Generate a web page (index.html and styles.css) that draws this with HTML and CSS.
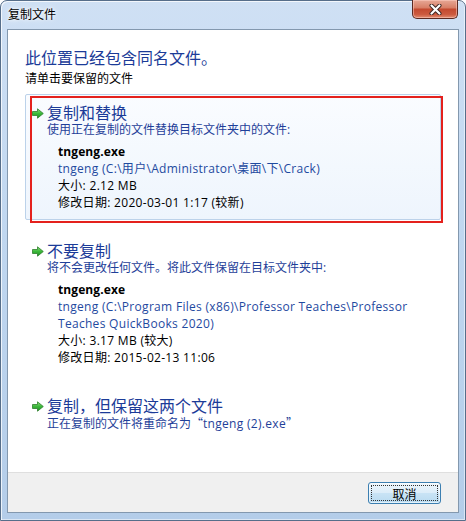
FILE: index.html
```html
<!DOCTYPE html>
<html lang="zh">
<head>
    <meta charset="UTF-8">
    <meta name="viewport" content="width=device-width, initial-scale=1.0">
    <title>复制文件</title>
    <link rel="stylesheet" href="styles.css">
</head>
<body>
    <!-- 共用的箭头渐变 -->
    <svg class="svg-defs" width="0" height="0" aria-hidden="true">
        <defs>
            <linearGradient id="arrowGreen" x1="0" y1="0" x2="0" y2="1">
                <stop offset="0" stop-color="#8be07a"/>
                <stop offset="0.5" stop-color="#3cb83a"/>
                <stop offset="1" stop-color="#1f8f22"/>
            </linearGradient>
        </defs>
    </svg>

    <div class="window">
        <div class="titlebar">
            <span class="window-title">复制文件</span>
            <button class="close-btn" aria-label="关闭">
                <svg width="13" height="11" viewBox="0 0 13 11">
                    <path d="M2.5 1.5 L10.5 9.5 M10.5 1.5 L2.5 9.5" stroke="#3a2320" stroke-width="4" stroke-linecap="round"/>
                    <path d="M2.5 1.5 L10.5 9.5 M10.5 1.5 L2.5 9.5" stroke="#fff" stroke-width="2.2" stroke-linecap="round"/>
                </svg>
            </button>
        </div>

        <div class="client">
            <div class="content">
                <h1 class="main-title">此位置已经包含同名文件。</h1>
                <p class="hint">请单击要保留的文件</p>

                <!-- 复制和替换 -->
                <div class="option selected">
                    <svg class="arrow" width="12" height="11" viewBox="0 0 12 11">
                        <path d="M0.5 3.5 H5.5 V0.8 L11.3 5.5 L5.5 10.2 V7.5 H0.5 Z" fill="url(#arrowGreen)" stroke="#2c7d2b" stroke-width="0.8"/>
                    </svg>
                    <div class="option-body">
                        <div class="option-title">复制和替换</div>
                        <div class="option-desc">使用正在复制的文件替换目标文件夹中的文件:</div>
                        <div class="file-info">
                            <div class="file-name">tngeng.exe</div>
                            <div class="file-path">tngeng (C:\用户\Administrator\桌面\下\Crack)</div>
                            <div>大小: 2.12 MB</div>
                            <div>修改日期: 2020-03-01 1:17 (较新)</div>
                        </div>
                    </div>
                </div>

                <!-- 不要复制 -->
                <div class="option">
                    <svg class="arrow" width="12" height="11" viewBox="0 0 12 11">
                        <path d="M0.5 3.5 H5.5 V0.8 L11.3 5.5 L5.5 10.2 V7.5 H0.5 Z" fill="url(#arrowGreen)" stroke="#2c7d2b" stroke-width="0.8"/>
                    </svg>
                    <div class="option-body">
                        <div class="option-title">不要复制</div>
                        <div class="option-desc">将不会更改任何文件。将此文件保留在目标文件夹中:</div>
                        <div class="file-info">
                            <div class="file-name">tngeng.exe</div>
                            <div class="file-path">tngeng (C:\Program Files (x86)\Professor Teaches\Professor Teaches QuickBooks 2020)</div>
                            <div>大小: 3.17 MB (较大)</div>
                            <div>修改日期: 2015-02-13 11:06</div>
                        </div>
                    </div>
                </div>

                <!-- 保留两个文件 -->
                <div class="option">
                    <svg class="arrow" width="12" height="11" viewBox="0 0 12 11">
                        <path d="M0.5 3.5 H5.5 V0.8 L11.3 5.5 L5.5 10.2 V7.5 H0.5 Z" fill="url(#arrowGreen)" stroke="#2c7d2b" stroke-width="0.8"/>
                    </svg>
                    <div class="option-body">
                        <div class="option-title">复制，但保留这两个文件</div>
                        <div class="option-desc">正在复制的文件将重命名为<span class="cjk">“</span><span class="latin">tngeng (2).exe</span><span class="cjk">”</span></div>
                    </div>
                </div>
            </div>

            <div class="footer">
                <button class="btn">取消</button>
            </div>
        </div>
    </div>
</body>
</html>
```

FILE: styles.css
```css
* {
    margin: 0;
    padding: 0;
    box-sizing: border-box;
}

html, body {
    width: 466px;
    height: 521px;
    overflow: hidden;
}

body {
    font-family: "Open Sans", "Noto Sans CJK SC", sans-serif;
    font-size: 12px;
    line-height: 17px;
    color: #000;
    background: #fff;
}

.svg-defs {
    display: block;
    width: 0;
    height: 0;
}

/* 窗口外框 (Aero) */
.window {
    height: 521px;
    display: flex;
    flex-direction: column;
    padding: 0 6px 7px 6px;
    border: 1px solid #566e8a;
    border-radius: 7px 7px 0 0;
    background: linear-gradient(to bottom, #cfe0f4 0%, #c0d7f0 45%, #b4cde9 100%);
    box-shadow: inset 1px 1px 0 rgba(255, 255, 255, 0.75), inset -1px -1px 0 rgba(255, 255, 255, 0.5);
}

.titlebar {
    height: 28px;
    display: flex;
    justify-content: space-between;
    align-items: flex-start;
    padding-left: 1px;
}

.window-title {
    margin-top: 4px;
    font-family: "Noto Sans CJK SC", sans-serif;
    font-size: 12px;
    line-height: 18px;
    color: #000;
    text-shadow: 0 0 6px #fff, 0 0 3px #fff;
}

.close-btn {
    width: 46px;
    height: 19px;
    margin-top: -1px;
    margin-right: 1px;
    display: flex;
    align-items: center;
    justify-content: center;
    border: 1px solid #5b2a22;
    border-top: none;
    border-radius: 0 0 5px 5px;
    background: linear-gradient(to bottom, #e7a896 0%, #d88068 42%, #c44a30 52%, #cc5a3f 80%, #e28d72 100%);
    box-shadow: inset 0 0 0 1px rgba(255, 210, 200, 0.5);
}

/* 客户区 */
.client {
    flex: 1;
    display: flex;
    flex-direction: column;
    border: 1px solid #8398ae;
    background: #fff;
}

.content {
    flex: 1;
    padding: 17px 17px 0 17px;
}

.main-title {
    font-family: "Noto Sans CJK SC", sans-serif;
    font-size: 16px;
    line-height: 20px;
    font-weight: normal;
    color: #1b3b98;
}

.hint {
    margin-top: 2px;
    margin-bottom: 8px;
    font-family: "Noto Sans CJK SC", sans-serif;
}

/* 选项 */
.option {
    position: relative;
    display: flex;
    gap: 3px;
    padding: 8px 10px 8px 6px;
    margin-bottom: 12px;
    border: 1px solid transparent;
    border-radius: 2px;
}

.option.selected {
    border-color: #bcd2ea;
    background: linear-gradient(to bottom, #fafcff 0%, #eef5fd 100%);
}

/* 红色标注框 */
.option.selected::after {
    content: '';
    position: absolute;
    top: 1px;
    left: 4px;
    right: -3px;
    bottom: -4px;
    border: 2px solid #e4211d;
}

.arrow {
    flex-shrink: 0;
    margin-top: 5px;
}

.option-body {
    flex: 1;
}

.option-title {
    font-family: "Noto Sans CJK SC", sans-serif;
    font-size: 16px;
    line-height: 18px;
    color: #1b3b98;
}

.option-desc {
    color: #1f3f99;
}

.cjk {
    font-family: "Noto Sans CJK SC", sans-serif;
}

.latin {
    letter-spacing: 0.3px;
}

.file-info {
    margin-top: 5px;
    padding-left: 11px;
    letter-spacing: 0.3px;
}

.file-name {
    font-weight: bold;
    letter-spacing: 0.1px;
}

.file-path {
    color: #1f4a9f;
}

/* 底部按钮栏 */
.footer {
    display: flex;
    justify-content: flex-end;
    padding: 9px 17px 8px;
    border-top: 1px solid #dfdfdf;
    background: #f0f0f0;
}

.btn {
    position: relative;
    width: 73px;
    height: 22px;
    border: 1px solid #3c7fb1;
    border-radius: 3px;
    font-family: "Noto Sans CJK SC", sans-serif;
    font-size: 12px;
    color: #000;
    background: linear-gradient(to bottom, #edf6fc 0%, #dcedf9 48%, #c8e3f5 52%, #b9dbf1 100%);
    box-shadow: inset 0 0 0 1px rgba(255, 255, 255, 0.6);
}

.btn::after {
    content: '';
    position: absolute;
    top: 2px;
    left: 2px;
    right: 2px;
    bottom: 2px;
    border: 1px dotted #333;
}
```
